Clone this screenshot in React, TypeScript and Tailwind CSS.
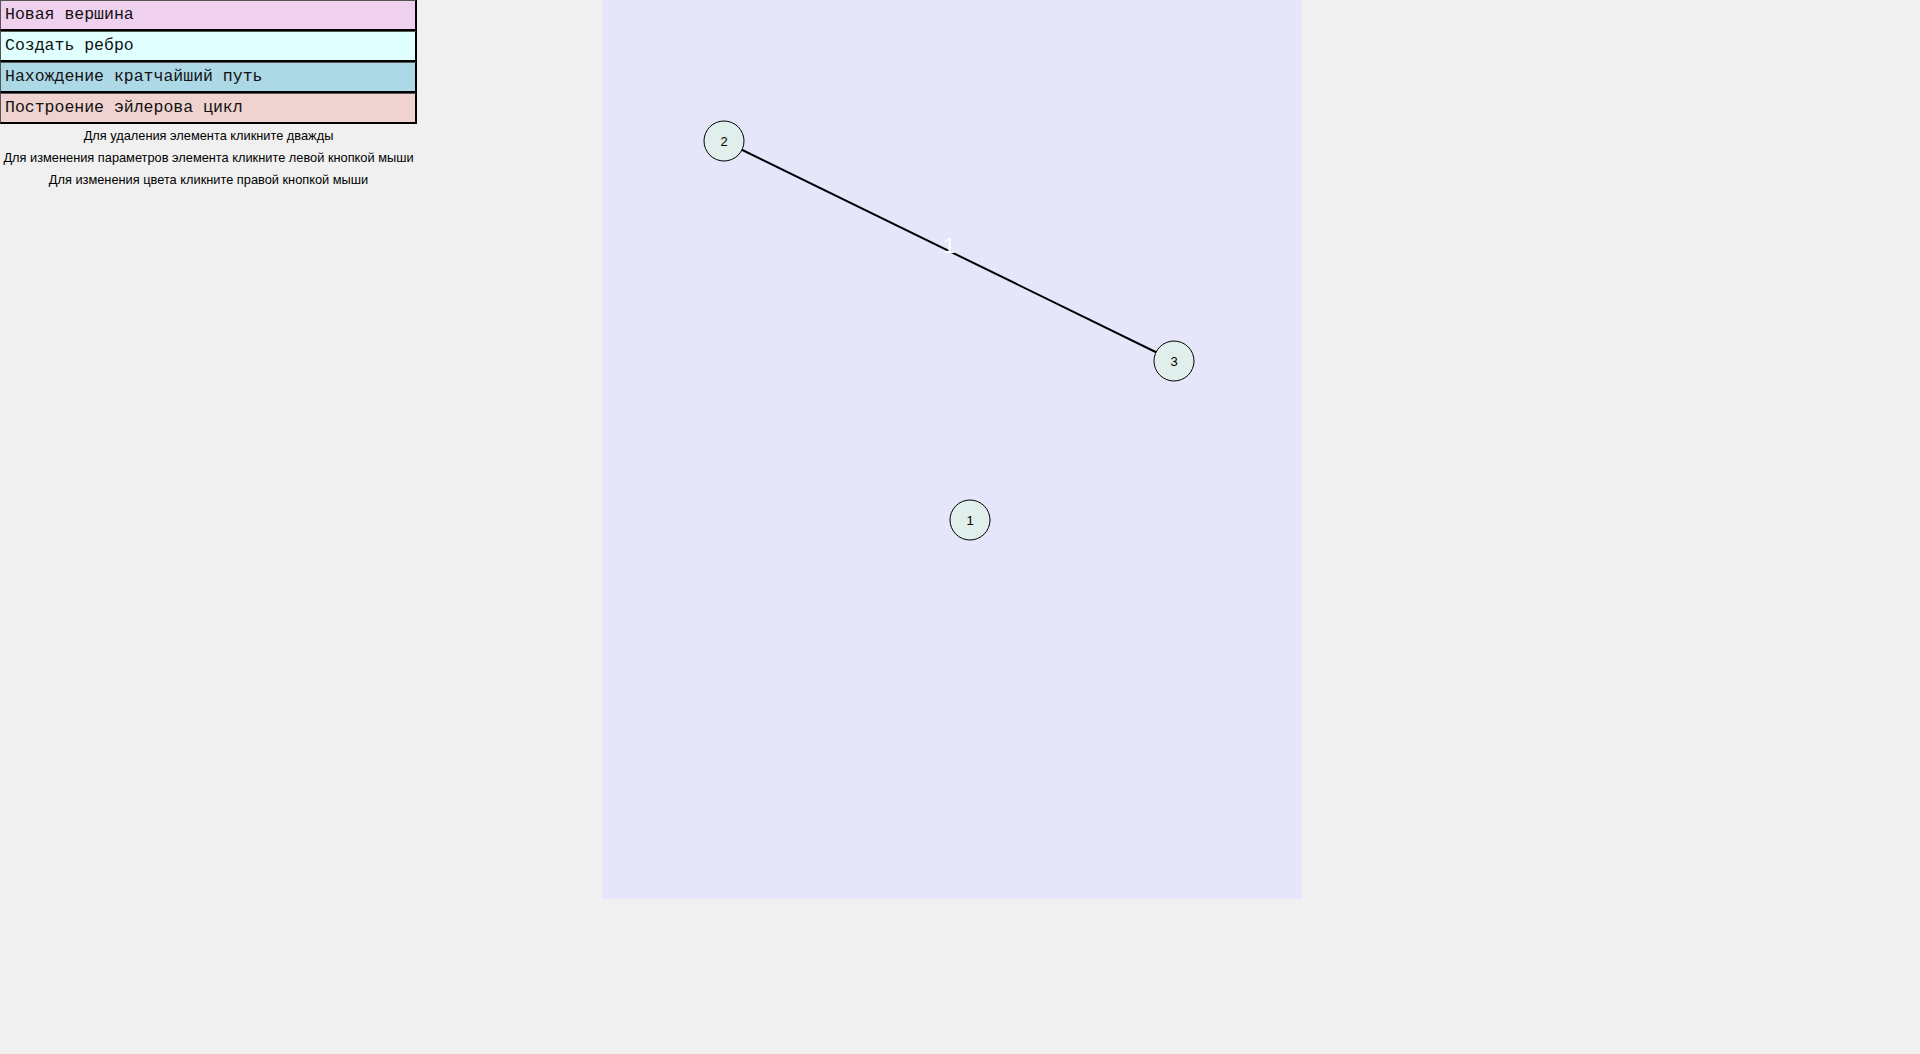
import type { ReactNode } from "react";

// Graph editor: tool buttons on the left, drawing canvas in the middle.

const TOOLS = [
  { label: "Новая вершина", bg: "bg-[#efd0ee]" },
  { label: "Создать ребро", bg: "bg-[#e0ffff]" },
  { label: "Нахождение кратчайший путь", bg: "bg-[#add8e6]" },
  { label: "Построение эйлерова цикл", bg: "bg-[#efd3d0]" },
];

const HINTS = [
  "Для удаления элемента кликните дважды",
  "Для изменения параметров элемента кликните левой кнопкой мыши",
  "Для изменения цвета кликните правой кнопкой мыши",
];

const NODES = [
  { id: 1, x: 368, y: 520 },
  { id: 2, x: 122, y: 141 },
  { id: 3, x: 572, y: 361 },
];

const EDGES = [{ id: 1, from: 2, to: 3, lx: 347, ly: 253 }];

function ToolButton({ label, bg }: { label: string; bg: string }): ReactNode {
  return (
    <button
      type="button"
      className={`block h-[31px] w-full border-t border-l border-[#555] border-b-2 border-r-2 border-b-black border-r-black ${bg} px-[4px] text-left font-['Liberation_Mono',monospace] text-[16.5px] leading-none text-[#111]`}
    >
      {label}
    </button>
  );
}

export default function App() {
  const byId = (id: number) => NODES.find((n) => n.id === id)!;

  return (
    <div className="flex min-h-[1054px] w-full items-start bg-[#f0f0f0] font-['Liberation_Sans',Arial,sans-serif]">
      {/* Left tool panel */}
      <div className="w-[417px] shrink-0">
        {TOOLS.map((t) => (
          <ToolButton key={t.label} label={t.label} bg={t.bg} />
        ))}
        <div className="mt-[1px] text-center text-[12.8px] leading-[22px] text-black">
          {HINTS.map((h) => (
            <div key={h}>{h}</div>
          ))}
        </div>
      </div>

      {/* Canvas */}
      <div className="ml-[185px] h-[899px] w-[700px] shrink-0 bg-[#e5e6fa]">
        <svg width="700" height="899" viewBox="0 0 700 899">
          {EDGES.map((e) => {
            const a = byId(e.from);
            const b = byId(e.to);
            return (
              <g key={e.id}>
                <line x1={a.x} y1={a.y} x2={b.x} y2={b.y} stroke="#000" strokeWidth={2} />
                <text
                  x={e.lx}
                  y={e.ly}
                  textAnchor="middle"
                  fill="#fff"
                  fontSize="22"
                  fontFamily="'Liberation Sans', Arial, sans-serif"
                >
                  {e.id}
                </text>
              </g>
            );
          })}
          {NODES.map((n) => (
            <g key={n.id}>
              <circle cx={n.x} cy={n.y} r={20} fill="#e0eeec" stroke="#000" strokeWidth={1} />
              <text
                x={n.x}
                y={n.y + 5}
                textAnchor="middle"
                fill="#000"
                fontSize="13"
                fontFamily="'Liberation Sans', Arial, sans-serif"
              >
                {n.id}
              </text>
            </g>
          ))}
        </svg>
      </div>
    </div>
  );
}
